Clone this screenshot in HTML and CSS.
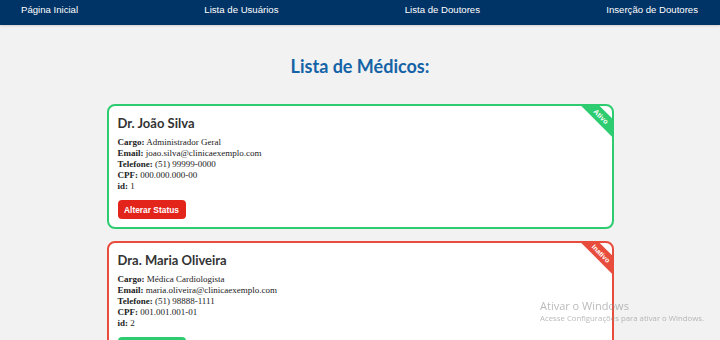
FILE: index.html
```html
<!DOCTYPE html>
<html lang="pt-BR">
<head>
<meta charset="utf-8">
<title>Lista de Médicos</title>
<link rel="stylesheet" href="styles.css">
</head>
<body>
<nav class="topnav">
  <a href="#">Página Inicial</a>
  <a href="#">Lista de Usuários</a>
  <a href="#">Lista de Doutores</a>
  <a href="#">Inserção de Doutores</a>
</nav>
<main class="content">
  <h1 class="page-title">Lista de Médicos:</h1>
  <section class="card card-active">
    <div class="ribbon ribbon-active">Ativo</div>
    <h2 class="card-name">Dr. João Silva</h2>
    <p class="field"><b>Cargo:</b> Administrador Geral</p>
    <p class="field"><b>Email:</b> joao.silva@clinicaexemplo.com</p>
    <p class="field"><b>Telefone:</b> (51) 99999-0000</p>
    <p class="field"><b>CPF:</b> 000.000.000-00</p>
    <p class="field"><b>id:</b> 1</p>
    <button class="btn btn-red">Alterar Status</button>
  </section>
  <section class="card card-inactive">
    <div class="ribbon ribbon-inactive">Inativo</div>
    <h2 class="card-name">Dra. Maria Oliveira</h2>
    <p class="field"><b>Cargo:</b> Médica Cardiologista</p>
    <p class="field"><b>Email:</b> maria.oliveira@clinicaexemplo.com</p>
    <p class="field"><b>Telefone:</b> (51) 98888-1111</p>
    <p class="field"><b>CPF:</b> 001.001.001-01</p>
    <p class="field"><b>id:</b> 2</p>
    <button class="btn btn-green">Alterar Status</button>
  </section>
</main>
<div class="watermark">
  <div class="wm-title">Ativar o Windows</div>
  <div class="wm-sub">Acesse Configurações para ativar o Windows.</div>
</div>
</body>
</html>
```

FILE: styles.css
```css
html, body {
  margin: 0;
  padding: 0;
}
body {
  background: #f2f2f2;
  font-family: "Liberation Sans", Arial, sans-serif;
  overflow: hidden;
}
.topnav {
  background: #003366;
  height: 25px;
  box-sizing: border-box;
  display: flex;
  align-items: flex-start;
  justify-content: space-between;
  padding: 4px 22px 0 21px;
  box-shadow: 0 1px 2px rgba(0,0,0,0.15);
}
.topnav a {
  color: #ffffff;
  text-decoration: none;
  font-size: 9.6px;
  line-height: 12px;
}
.content {
  display: flex;
  flex-direction: column;
  align-items: center;
}
.page-title {
  font-family: "Lato", sans-serif;
  font-weight: 700;
  font-size: 18px;
  color: #1563a6;
  margin: 30px 0 27px;
  line-height: 22px;
}
.card {
  position: relative;
  width: 507px;
  box-sizing: border-box;
  background: #ffffff;
  border: 2px solid #2ecc71;
  border-radius: 8px;
  padding: 8px 10px 8px 9px;
  margin-bottom: 12px;
  overflow: hidden;
}
.card-inactive {
  border-color: #e74c3c;
}
.card-name {
  font-family: "Lato", sans-serif;
  font-weight: 700;
  font-size: 13px;
  color: #333333;
  margin: 0 0 5px;
  line-height: 18px;
}
.field {
  font-family: "Liberation Serif", "Times New Roman", serif;
  font-size: 9px;
  line-height: 11px;
  color: #222;
  margin: 0;
}
.btn {
  display: block;
  margin-top: 8px;
  border: none;
  border-radius: 4px;
  color: #fff;
  font-family: "Liberation Sans", Arial, sans-serif;
  font-weight: 700;
  font-size: 8.4px;
  height: 19px;
  width: 68px;
  padding: 0;
}
.btn-red { background: #e3241b; }
.btn-green { background: #2ecc71; }
.ribbon {
  position: absolute;
  top: 4px;
  right: -29px;
  width: 80px;
  height: 13px;
  line-height: 13px;
  text-align: center;
  color: #fff;
  font-family: "Liberation Sans", Arial, sans-serif;
  font-weight: 700;
  font-size: 7px;
  transform: rotate(45deg);
}
.ribbon-active { background: #2ecc71; }
.ribbon-inactive { background: #e74c3c; }
.watermark {
  position: fixed;
  left: 540px;
  top: 298px;
  color: rgba(140,140,140,0.6);
  font-family: "Open Sans", sans-serif;
  pointer-events: none;
}
.wm-title {
  font-size: 11px;
  line-height: 15px;
}
.wm-sub {
  font-size: 7.8px;
  line-height: 11px;
}
```
